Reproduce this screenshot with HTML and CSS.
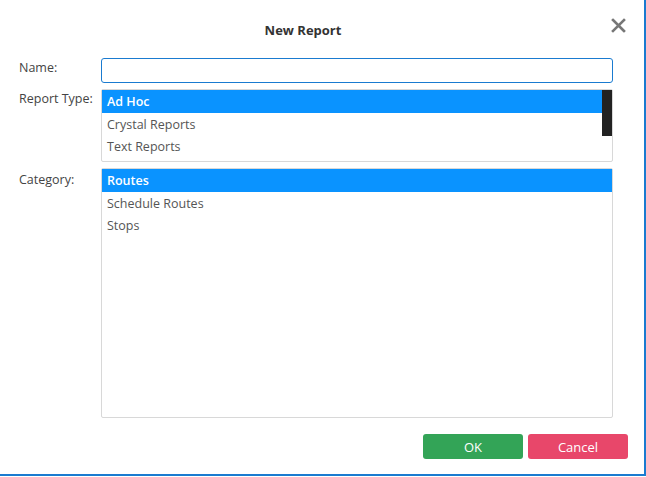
FILE: index.html
```html
<!DOCTYPE html>
<html lang="en">
<head>
    <meta charset="UTF-8">
    <title>New Report</title>
    <link rel="stylesheet" href="styles.css">
</head>
<body>
    <div class="dialog">
        <div class="dialog-header">
            <h1>New Report</h1>
            <span class="close-btn">
                <svg width="15" height="15" viewBox="0 0 15 15">
                    <path d="M2 2 L13 13 M13 2 L2 13" stroke="#777" stroke-width="2.6" stroke-linecap="square"/>
                </svg>
            </span>
        </div>
        <form class="report-form">
            <label for="name">Name:</label>
            <input type="text" id="name" class="name-input">
            <label class="type-label">Report Type:</label>
            <div class="listbox type-list">
                <div class="list-item selected">Ad Hoc</div>
                <div class="list-item">Crystal Reports</div>
                <div class="list-item">Text Reports</div>
                <div class="scroll-thumb"></div>
            </div>
            <label class="category-label">Category:</label>
            <div class="listbox category-list">
                <div class="list-item selected">Routes</div>
                <div class="list-item">Schedule Routes</div>
                <div class="list-item">Stops</div>
            </div>
        </form>
        <div class="dialog-footer">
            <button type="button" class="btn btn-ok">OK</button>
            <button type="button" class="btn btn-cancel">Cancel</button>
        </div>
    </div>
</body>
</html>
```

FILE: styles.css
```css
body {
    margin: 0;
    font-family: 'Open Sans', 'Noto Sans', sans-serif;
    font-size: 12.5px;
    color: #444;
    background-color: #fff;
}
.dialog {
    width: 646px;
    height: 476px;
    border-right: 2px solid #1a7bd0;
    border-bottom: 2px solid #1a7bd0;
    box-sizing: border-box;
    position: relative;
}
.dialog-header {
    height: 58px;
}
.dialog-header h1 {
    margin: 0;
    padding-top: 21px;
    padding-right: 38px;
    text-align: center;
    font-size: 13px;
    font-weight: bold;
    color: #333;
}
.close-btn {
    position: absolute;
    top: 18px;
    left: 611px;
    line-height: 0;
}
.report-form {
    display: grid;
    grid-template-columns: 82px 512px;
    row-gap: 6px;
    padding-left: 19px;
}
.report-form label {
    color: #444;
    padding-top: 1px;
    line-height: 17px;
}
.report-form .category-label {
    padding-top: 3px;
}
.name-input {
    height: 25px;
    box-sizing: border-box;
    border: 1px solid #1a7bd0;
    border-radius: 3px;
    margin: 0;
    padding: 0 6px;
    font-family: inherit;
    font-size: 12px;
}
.listbox {
    border: 1px solid #d8d8d8;
    border-radius: 2px;
    position: relative;
    box-sizing: border-box;
}
.type-list {
    height: 73px;
}
.category-list {
    height: 250px;
}
.list-item {
    height: 22.5px;
    line-height: 23px;
    padding-left: 5px;
    color: #555;
}
.list-item.selected {
    background-color: #0a93ff;
    color: #fff;
    font-weight: 600;
}
.scroll-thumb {
    position: absolute;
    top: 0;
    right: 0;
    width: 10px;
    height: 46px;
    background-color: #222;
}
.dialog-footer {
    display: flex;
    justify-content: flex-end;
    gap: 5px;
    padding: 16px 16px 0 0;
}
.btn {
    width: 100px;
    height: 25px;
    border: none;
    border-radius: 3px;
    color: #fff;
    font-family: inherit;
    font-size: 13px;
    padding: 0;
}
.btn-ok {
    background-color: #33a457;
}
.btn-cancel {
    background-color: #e8476a;
}
```
